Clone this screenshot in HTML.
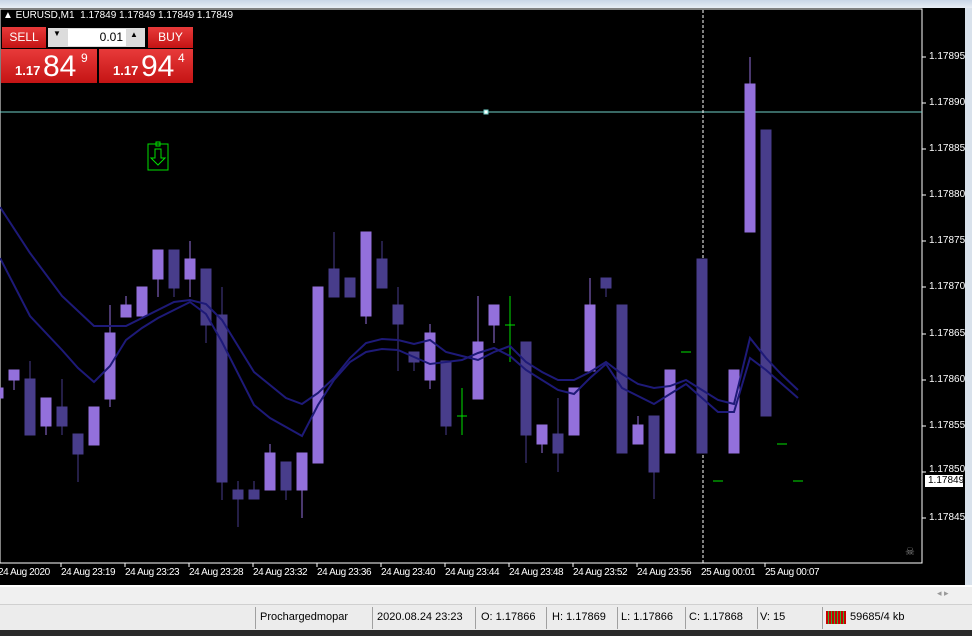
<!DOCTYPE html>
<html><head><meta charset="utf-8"><style>
*{margin:0;padding:0;box-sizing:border-box}
body{width:972px;height:636px;overflow:hidden;background:#000;font-family:"Liberation Sans",sans-serif;position:relative}
.abs{position:absolute}
.red{background:linear-gradient(#e83a3a,#c41414);color:#fff}
.tl{position:absolute;top:567px;font-size:10px;color:#fff;letter-spacing:-0.4px;white-space:nowrap}
.pl{position:absolute;left:929px;font-size:10px;color:#fff;white-space:nowrap}
.sb{position:absolute;top:611px;font-size:11px;color:#000;white-space:nowrap}
.sep{position:absolute;top:607px;width:1px;height:22px;background:#a0a0a0}
</style></head><body>
<div class="abs" style="left:0;top:0;width:972px;height:8px;background:linear-gradient(#c9d6e6,#e8eef5)"></div>
<div class="abs" style="left:965px;top:8px;width:7px;height:580px;background:#d9e2ec"></div>
<svg class="abs" style="left:0;top:0" width="972" height="600">
<rect x="0" y="9" width="922" height="554" fill="none" stroke="#fff" stroke-width="1"/>
<line x1="0" y1="112" x2="922" y2="112" stroke="#6fd0c8"/>
<rect x="484" y="110" width="4" height="4" fill="#fff" stroke="#6fd0c8"/>
<line x1="703" y1="10" x2="703" y2="563" stroke="#fff" stroke-dasharray="3,2"/>
<g stroke-width="1">
<g fill="#9370db" stroke="#9370db">
<line x1="14" y1="370" x2="14" y2="390"/><rect x="9" y="370" width="10" height="10"/>
<rect x="-3" y="388" width="6" height="10"/>
<line x1="46" y1="398" x2="46" y2="435"/><rect x="41" y="398" width="10" height="28"/>
<rect x="89" y="407" width="10" height="38"/>
<line x1="110" y1="305" x2="110" y2="407"/><rect x="105" y="333" width="10" height="66"/>
<line x1="126" y1="296" x2="126" y2="317"/><rect x="121" y="305" width="10" height="12"/>
<rect x="137" y="287" width="10" height="29"/>
<line x1="158" y1="250" x2="158" y2="297"/><rect x="153" y="250" width="10" height="29"/>
<line x1="190" y1="241" x2="190" y2="297"/><rect x="185" y="259" width="10" height="20"/>
<line x1="270" y1="444" x2="270" y2="490"/><rect x="265" y="453" width="10" height="37"/>
<line x1="302" y1="453" x2="302" y2="518"/><rect x="297" y="453" width="10" height="37"/>
<rect x="313" y="287" width="10" height="176"/>
<line x1="366" y1="232" x2="366" y2="324"/><rect x="361" y="232" width="10" height="84"/>
<line x1="430" y1="324" x2="430" y2="389"/><rect x="425" y="333" width="10" height="47"/>
<line x1="478" y1="296" x2="478" y2="399"/><rect x="473" y="342" width="10" height="57"/>
<line x1="494" y1="305" x2="494" y2="343"/><rect x="489" y="305" width="10" height="20"/>
<line x1="542" y1="425" x2="542" y2="453"/><rect x="537" y="425" width="10" height="19"/>
<rect x="569" y="388" width="10" height="47"/>
<line x1="590" y1="278" x2="590" y2="371"/><rect x="585" y="305" width="10" height="66"/>
<line x1="638" y1="416" x2="638" y2="444"/><rect x="633" y="425" width="10" height="19"/>
<rect x="665" y="370" width="10" height="83"/>
<rect x="729" y="370" width="10" height="83"/>
<line x1="750" y1="57" x2="750" y2="232"/><rect x="745" y="84" width="10" height="148"/>
</g>
<g fill="#483d8b" stroke="#483d8b">
<line x1="30" y1="361" x2="30" y2="435"/><rect x="25" y="379" width="10" height="56"/>
<line x1="62" y1="379" x2="62" y2="435"/><rect x="57" y="407" width="10" height="19"/>
<line x1="78" y1="434" x2="78" y2="482"/><rect x="73" y="434" width="10" height="20"/>
<line x1="174" y1="250" x2="174" y2="297"/><rect x="169" y="250" width="10" height="38"/>
<line x1="206" y1="269" x2="206" y2="343"/><rect x="201" y="269" width="10" height="56"/>
<line x1="222" y1="287" x2="222" y2="500"/><rect x="217" y="315" width="10" height="167"/>
<line x1="238" y1="481" x2="238" y2="527"/><rect x="233" y="490" width="10" height="9"/>
<line x1="254" y1="481" x2="254" y2="499"/><rect x="249" y="490" width="10" height="9"/>
<line x1="286" y1="462" x2="286" y2="500"/><rect x="281" y="462" width="10" height="28"/>
<line x1="334" y1="232" x2="334" y2="297"/><rect x="329" y="269" width="10" height="28"/>
<rect x="345" y="278" width="10" height="19"/>
<line x1="382" y1="241" x2="382" y2="288"/><rect x="377" y="259" width="10" height="29"/>
<line x1="398" y1="287" x2="398" y2="371"/><rect x="393" y="305" width="10" height="19"/>
<line x1="414" y1="352" x2="414" y2="371"/><rect x="409" y="352" width="10" height="10"/>
<line x1="446" y1="361" x2="446" y2="435"/><rect x="441" y="361" width="10" height="65"/>
<line x1="526" y1="342" x2="526" y2="463"/><rect x="521" y="342" width="10" height="93"/>
<line x1="558" y1="398" x2="558" y2="472"/><rect x="553" y="434" width="10" height="19"/>
<line x1="606" y1="278" x2="606" y2="297"/><rect x="601" y="278" width="10" height="10"/>
<rect x="617" y="305" width="10" height="148"/>
<line x1="654" y1="416" x2="654" y2="499"/><rect x="649" y="416" width="10" height="56"/>
<rect x="697" y="259" width="10" height="194"/>
<rect x="761" y="130" width="10" height="286"/>
</g>
<g stroke="#00e000">
<line x1="462" y1="388" x2="462" y2="435"/><line x1="457" y1="416" x2="467" y2="416"/>
<line x1="510" y1="296" x2="510" y2="362"/><line x1="505" y1="325" x2="515" y2="325"/>
<line x1="681" y1="352" x2="691" y2="352"/><line x1="713" y1="481" x2="723" y2="481"/>
<line x1="777" y1="444" x2="787" y2="444"/><line x1="793" y1="481" x2="803" y2="481"/>
</g>
</g>
<polyline fill="none" stroke="#1e1a78" stroke-width="2" points="0,207 30,253 62,296 94,326 126,326 174,302 190,300 206,304 222,320 254,372 286,398 302,404 318,393 334,378 350,358 366,343 382,339 398,340 414,344 430,340 446,352 462,356 478,360 494,352 510,346 526,362 542,372 558,380 574,380 590,372 606,362 622,374 638,384 654,388 670,386 686,380 702,390 718,400 734,404 750,338 766,358 782,375 798,390"/>
<polyline fill="none" stroke="#1e1a78" stroke-width="2" points="0,258 30,316 62,350 78,368 94,382 110,366 126,340 142,328 158,318 174,310 190,302 206,314 222,342 254,405 270,418 302,436 318,405 334,380 350,362 366,352 382,349 398,350 414,357 430,364 446,362 462,360 478,353 494,348 510,356 526,370 542,380 558,390 574,394 590,378 606,364 622,388 638,396 654,404 670,394 686,384 702,398 718,412 734,412 750,358 766,370 782,384 798,398"/>
<g stroke="#00e000" fill="none">
<rect x="148" y="144" width="20" height="26"/><rect x="156" y="142" width="4" height="4"/>
<path d="M155 149v9h-4l7 7 7-7h-4v-9z"/>
</g>
<g stroke="#fff">
<line x1="922" y1="57" x2="926" y2="57"/><line x1="922" y1="103" x2="926" y2="103"/><line x1="922" y1="149" x2="926" y2="149"/><line x1="922" y1="195" x2="926" y2="195"/><line x1="922" y1="241" x2="926" y2="241"/><line x1="922" y1="287" x2="926" y2="287"/><line x1="922" y1="334" x2="926" y2="334"/><line x1="922" y1="380" x2="926" y2="380"/><line x1="922" y1="426" x2="926" y2="426"/><line x1="922" y1="472" x2="926" y2="472"/><line x1="922" y1="518" x2="926" y2="518"/>
<line x1="61" y1="563" x2="61" y2="567"/><line x1="125" y1="563" x2="125" y2="567"/><line x1="189" y1="563" x2="189" y2="567"/><line x1="253" y1="563" x2="253" y2="567"/><line x1="317" y1="563" x2="317" y2="567"/><line x1="381" y1="563" x2="381" y2="567"/><line x1="445" y1="563" x2="445" y2="567"/><line x1="509" y1="563" x2="509" y2="567"/><line x1="573" y1="563" x2="573" y2="567"/><line x1="637" y1="563" x2="637" y2="567"/><line x1="765" y1="563" x2="765" y2="567"/>
</g>
<text x="905" y="555" fill="#888" font-size="11">☠</text>
</svg>
<div class="abs" style="left:3px;top:10px;font-size:10px;color:#fff;white-space:nowrap">▲ EURUSD,M1&nbsp; 1.17849 1.17849 1.17849 1.17849</div>
<div class="pl" style="top:51px">1.17895</div><div class="pl" style="top:97px">1.17890</div><div class="pl" style="top:143px">1.17885</div><div class="pl" style="top:189px">1.17880</div><div class="pl" style="top:235px">1.17875</div><div class="pl" style="top:281px">1.17870</div><div class="pl" style="top:328px">1.17865</div><div class="pl" style="top:374px">1.17860</div><div class="pl" style="top:420px">1.17855</div><div class="pl" style="top:464px">1.17850</div><div class="pl" style="top:512px">1.17845</div>
<div class="abs" style="left:925px;top:475px;width:38px;height:12px;background:#fff;color:#000;font-size:10px;padding-left:3px;line-height:12px">1.17849</div>
<div class="tl" style="left:-2px">24 Aug 2020</div><div class="tl" style="left:61px">24 Aug 23:19</div><div class="tl" style="left:125px">24 Aug 23:23</div><div class="tl" style="left:189px">24 Aug 23:28</div><div class="tl" style="left:253px">24 Aug 23:32</div><div class="tl" style="left:317px">24 Aug 23:36</div><div class="tl" style="left:381px">24 Aug 23:40</div><div class="tl" style="left:445px">24 Aug 23:44</div><div class="tl" style="left:509px">24 Aug 23:48</div><div class="tl" style="left:573px">24 Aug 23:52</div><div class="tl" style="left:637px">24 Aug 23:56</div><div class="tl" style="left:701px">25 Aug 00:01</div><div class="tl" style="left:765px">25 Aug 00:07</div>
<div class="abs red" style="left:2px;top:27px;width:44px;height:21px;font-size:12px;text-align:center;line-height:21px">SELL</div>
<div class="abs" style="left:48px;top:28px;width:97px;height:19px;background:#dcdcdc"></div>
<div class="abs" style="left:68px;top:29px;width:58px;height:17px;background:#fff;font-size:12px;text-align:right;padding-right:3px;line-height:17px">0.01</div>
<div class="abs" style="left:53px;top:29px;font-size:8px">▼</div><div class="abs" style="left:130px;top:30px;font-size:8px">▲</div>
<div class="abs red" style="left:148px;top:27px;width:45px;height:21px;font-size:12px;text-align:center;line-height:21px">BUY</div>
<div class="abs red" style="left:1px;top:49px;width:96px;height:34px"><span class="abs" style="left:14px;top:14px;font-size:13px;font-weight:bold">1.17</span><span class="abs" style="left:42px;top:1px;font-size:30px">84</span><span class="abs" style="left:80px;top:2px;font-size:12px">9</span></div>
<div class="abs red" style="left:99px;top:49px;width:94px;height:34px"><span class="abs" style="left:14px;top:14px;font-size:13px;font-weight:bold">1.17</span><span class="abs" style="left:42px;top:1px;font-size:30px">94</span><span class="abs" style="left:79px;top:2px;font-size:12px">4</span></div>
<div class="abs" style="left:0;top:585px;width:972px;height:2px;background:#fff"></div>
<div class="abs" style="left:0;top:587px;width:972px;height:17px;background:#f0f0f0"></div>
<div class="abs" style="left:937px;top:588px;font-size:9px;color:#999">◂ ▸</div>
<div class="abs" style="left:0;top:604px;width:972px;height:26px;background:#ececec;border-top:1px solid #d0d0d0"></div>
<div class="sep" style="left:255px"></div><div class="sep" style="left:372px"></div><div class="sep" style="left:475px"></div><div class="sep" style="left:546px"></div><div class="sep" style="left:617px"></div><div class="sep" style="left:685px"></div><div class="sep" style="left:757px"></div><div class="sep" style="left:822px"></div>
<div class="sb" style="left:260px">Prochargedmopar</div><div class="sb" style="left:377px">2020.08.24 23:23</div><div class="sb" style="left:481px">O: 1.17866</div><div class="sb" style="left:552px">H: 1.17869</div><div class="sb" style="left:621px">L: 1.17866</div><div class="sb" style="left:689px">C: 1.17868</div><div class="sb" style="left:760px">V: 15</div>
<div class="abs" style="left:826px;top:611px;width:20px;height:13px;background:repeating-linear-gradient(90deg,#c00 0 2px,#3a3 2px 3px)"></div>
<div class="sb" style="left:850px">59685/4 kb</div>
<div class="abs" style="left:0;top:630px;width:972px;height:6px;background:#2a2a2a"></div>
</body></html>
